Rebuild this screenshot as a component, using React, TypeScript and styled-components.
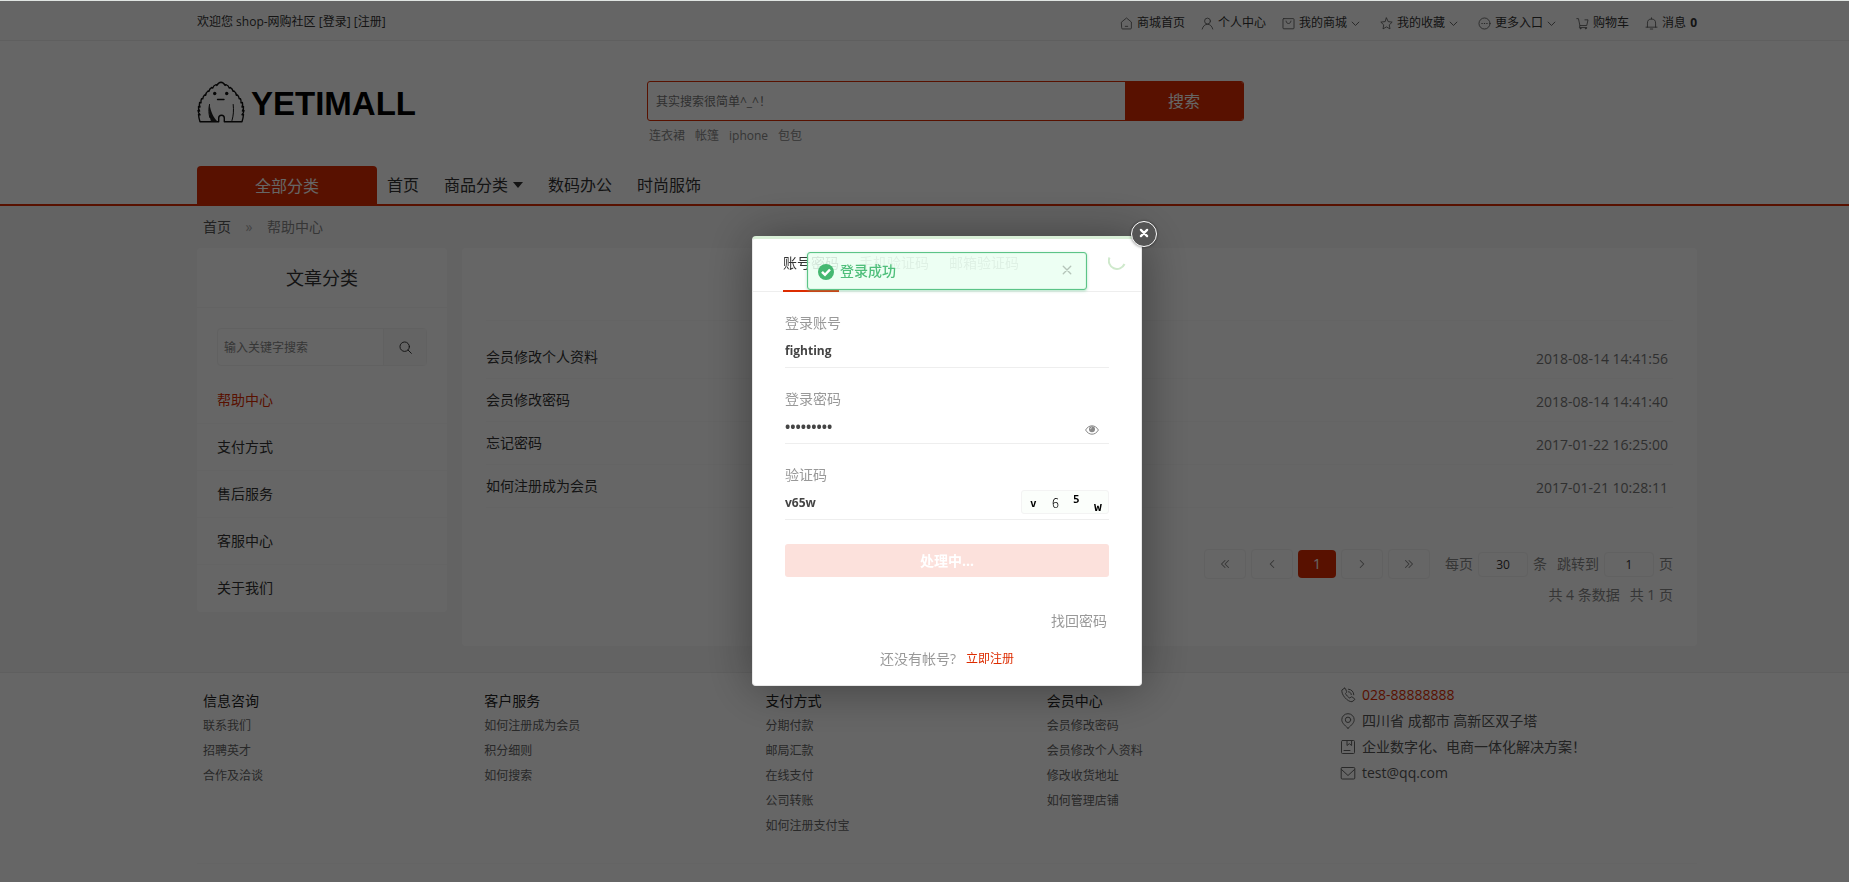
import React from "react";
import styled, { createGlobalStyle } from "styled-components";

const red = "#dd2c00";

const GlobalStyle = createGlobalStyle`
  * { box-sizing: border-box; }
  body {
    margin: 0;
    background: #fff;
    color: #333;
    font: 400 14px/20px "Open Sans", "Noto Sans CJK SC", sans-serif;
  }
  a { color: inherit; text-decoration: none; }
  button, input { font: inherit; color: inherit; margin: 0; }
  button { cursor: pointer; }
  ul { margin: 0; padding: 0; list-style: none; }
  h2, h3 { margin: 0; font-weight: inherit; }
`;

const Container = styled.div`
  padding: 0 152px 0 197px;
`;

/* ---------- icons ---------- */

const Svg = styled.svg<{ $size: number }>`
  width: ${(p) => p.$size}px;
  height: ${(p) => p.$size}px;
  flex: none;
  fill: none;
  stroke: currentColor;
  stroke-linecap: round;
  stroke-linejoin: round;
`;

const shapes: Record<string, React.ReactNode> = {
  home: (
    <>
      <path d="M2 6.200 8 1.200l6 5V13.500a1.200 1.200 0 0 1-1.200 1.200H3.200A1.200 1.200 0 0 1 2 13.500z" />
      <path d="M6.500 11.500h3" />
    </>
  ),
  user: (
    <>
      <circle cx="8" cy="5" r="3.600" />
      <path d="M1.500 14.800C2.500 11 5 9 8 9s5.500 2 6.500 5.800" />
    </>
  ),
  shop: (
    <>
      <rect x="1.200" y="2" width="13.600" height="12.500" rx="1" />
      <path d="M5 5c.3 2 1.500 3 3 3s2.700-1 3-3" />
    </>
  ),
  star: <path d="m8 1.200 2.100 4.500 4.900.6-3.600 3.400.9 4.900L8 12.200l-4.300 2.400.9-4.900L1 6.300l4.900-.6z" />,
  more: (
    <>
      <circle cx="8" cy="8" r="6.800" />
      <path d="M4.800 8h.4M7.800 8h.4M10.800 8h.4" strokeWidth="1.400" />
    </>
  ),
  cart: (
    <>
      <path d="M1 2h2l1.800 8.500h8.400L14.800 3.500H11" />
      <path d="M4.800 10.500 4.200 13h9" />
      <circle cx="5.500" cy="14.200" r=".5" />
      <circle cx="12" cy="14.200" r=".5" />
    </>
  ),
  bell: <path d="M3 12.500V7.500a5 5 0 0 1 10 0v5M1.200 12.500h13.600M6.500 14.800h3M8 2.500V1" />,
  down: <path d="m2 5.500 6 6 6-6" />,
  search: (
    <>
      <circle cx="7" cy="7" r="5.800" />
      <path d="m11.200 11.200 4 4" />
    </>
  ),
  phone: (
    <>
      <path d="M4.300 1.300 1.900 3C1 7.500 7.500 15 12 14.700l2.500-1.800c.4-.4.3-.8 0-1.200l-2.400-1.700c-.5-.3-.9-.2-1.200.1l-1 1C8.500 10.700 6 7.800 5.500 6.500l.9-1c.3-.4.4-.8.1-1.200L5.500 1.700c-.3-.5-.8-.7-1.200-.4z" />
      <path d="M8.500 2.200c3 .2 5.200 2.500 5.300 5.600M8.500 4.800c1.600.1 2.700 1.300 2.800 2.800" />
    </>
  ),
  pin: (
    <>
      <path d="M8 15.300C4 11.800 1.800 9.500 1.800 6.700a6.200 6 0 0 1 12.400 0c0 2.800-2.200 5.100-6.200 8.600z" />
      <circle cx="8" cy="6.800" r="2.700" />
    </>
  ),
  book: (
    <>
      <rect x="1.500" y="1.500" width="13" height="13" rx="1" />
      <path d="M7 1.500v5l2.300-1.800 2.300 1.800v-5M4 11.500h6" />
    </>
  ),
  mail: (
    <>
      <rect x="1.200" y="2.500" width="13.600" height="11.500" rx="1" />
      <path d="m1.500 4.500 6.500 6 6.500-6" />
    </>
  ),
  close: <path d="m3 3 10 10M13 3 3 13" />,
  left: <path d="M10 4 6 8l4 4" />,
  right: <path d="m6 4 4 4-4 4" />,
  first: <path d="M8 4 4 8l4 4M12 4 8 8l4 4" />,
  last: <path d="m4 4 4 4-4 4M8 4l4 4-4 4" />,
};

const Icon = ({ name, size = 14, weight = 1 }: { name: string; size?: number; weight?: number }) => (
  <Svg $size={size} viewBox="0 0 16 16" strokeWidth={weight} aria-hidden="true">
    {shapes[name]}
  </Svg>
);

/* ---------- top bar ---------- */

const TopBar = styled.div`
  background: #fcfcfc;
  border-bottom: 1px solid #eee;
  font-size: 12px;
`;

const TopInner = styled(Container)`
  display: flex;
  justify-content: space-between;
  height: 40px;
  padding-top: 12px;
`;

const TopLinks = styled.ul`
  display: flex;
  gap: 16px;
  padding-top: 1px;
`;

const TopLink = styled.a<{ $wide?: boolean }>`
  display: flex;
  align-items: center;
  gap: 4px;
  margin-right: ${(p) => (p.$wide ? 4 : 0)}px;
  svg { color: #555; }
`;

const topLinks: { icon: string; label: string; menu?: boolean; count?: number }[] = [
  { icon: "home", label: "商城首页" },
  { icon: "user", label: "个人中心" },
  { icon: "shop", label: "我的商城", menu: true },
  { icon: "star", label: "我的收藏", menu: true },
  { icon: "more", label: "更多入口", menu: true },
  { icon: "cart", label: "购物车" },
  { icon: "bell", label: "消息", count: 0 },
];

/* ---------- header ---------- */

const Header = styled(Container)`
  display: flex;
  align-items: flex-start;
  height: 125px;
  padding-top: 40px;
`;

const Logo = styled.a`
  display: flex;
  align-items: center;
  gap: 6px;
  width: 450px;
  height: 42px;
  flex: none;
  color: #000;
  font: bold 33px/42px "Liberation Sans", Arial, sans-serif;
`;

const LogoName = styled.span`
  padding-top: 4px;
`;

const YetiSvg = styled.svg`
  width: 48px;
  height: 42px;
  flex: none;
`;

const Yeti = () => (
  <YetiSvg viewBox="0 0 48 42" fill="none" stroke="#111" strokeWidth="1.400" strokeLinejoin="round" strokeLinecap="round" aria-hidden="true">
    <path d="M3 40.800Q1.800 37 1.500 33.500l1.500.3Q1.200 31.500 1 29.500l1.600.5Q1.200 27.500 1.500 25.500l1.500.6Q2 23.500 2.600 21.500l1.400.4Q3.600 19.500 4.600 17.600l1.200.2Q6 15.500 7.500 14l1.200.2Q9 11.500 11 10l.9.400Q12.500 7.500 14.800 6.500l.900.600Q16.500 4.300 19 3.600l.900.800Q21.500 1.300 24 1.200Q26.500 1.300 28.100 4.400l.900-.800Q31.500 4.300 32.300 7.100l.900-.600Q35.500 7.500 36.100 10.400l.9-.4Q39 11.500 39.300 14.200l1.200-.2Q42 15.500 42.200 17.800l1.200-.2Q44.400 19.500 44 21.900l1.400-.4Q46 23.500 45 26.100l1.500-.6Q46.800 27.500 45.400 30l1.600-.5Q46.800 31.500 45 33.800l1.500-.3Q46.200 37 45 40.800H27.300V37a2.800 2.800 0 0 0-5.600 0v3.800z" />
    <path d="M12.500 23.500c-1 6-.2 12 1.500 17h6.500c-4-4-6.500-9-8-17z" fill="#222" stroke="none" />
    <path d="M36.200 23.500c.6 6 .3 11-1.200 16M12.500 23.500c-1 5-.8 9 .3 13" strokeWidth="1" />
    <circle cx="17.700" cy="12.500" r="1.700" fill="#111" stroke="none" />
    <circle cx="29.700" cy="12.500" r="1.700" fill="#111" stroke="none" />
    <path d="M20.500 18.500h6.500" />
  </YetiSvg>
);

const SearchArea = styled.div`
  width: 597px;
`;

const SearchForm = styled.form`
  display: flex;
  height: 40px;
  border: 1px solid ${red};
  border-radius: 3px;
  overflow: hidden;
`;

const SearchInput = styled.input`
  flex: 1;
  min-width: 0;
  border: 0;
  padding: 2px 8px 0;
  background: transparent;
  font-size: 12px;
  outline: none;
  &::placeholder { color: #777; opacity: 1; }
`;

const SearchButton = styled.button`
  width: 118px;
  border: 0;
  background: ${red};
  color: #fff;
  font-size: 16px;
`;

const HotWords = styled.div`
  display: flex;
  gap: 10px;
  padding: 5px 2px 0;
  color: #888;
  font-size: 12px;
`;

const NavLine = styled.nav`
  border-bottom: 2px solid ${red};
  font-size: 16px;
`;

const NavInner = styled(Container)`
  display: flex;
`;

const AllCategories = styled.a`
  width: 180px;
  height: 38px;
  margin-right: 10px;
  border-radius: 4px 4px 0 0;
  background: ${red};
  color: #fff;
  line-height: 40px;
  text-align: center;
`;

const NavItem = styled.a`
  display: flex;
  align-items: center;
  gap: 5px;
  height: 38px;
  margin-right: 25px;
`;

const Caret = styled.span`
  border: 5px solid transparent;
  border-top: 6px solid #333;
  border-bottom: 0;
`;

/* ---------- body ---------- */

const Body = styled.main`
  background: #f8f8f8;
  padding-bottom: 26px;
`;

const Crumbs = styled.div`
  display: flex;
  align-items: center;
  height: 42px;
  padding-left: 6px;
  color: #888;
`;

const CrumbMark = styled.span`
  width: 36px;
  text-align: center;
  color: #aaa;
`;

const CrumbHome = styled.a`
  color: #555;
`;

const Columns = styled.div`
  display: flex;
  align-items: flex-start;
  gap: 15px;
`;

const Sidebar = styled.aside`
  width: 250px;
  flex: none;
  padding-bottom: 1px;
  border-radius: 4px;
  background: #fff;
`;

const SideTitle = styled.h2`
  height: 60px;
  border-bottom: 1px solid #f8f8f8;
  font-size: 18px;
  line-height: 60px;
  text-align: center;
`;

const SideSearch = styled.form`
  display: flex;
  height: 38px;
  margin: 20px 20px 10px;
  border: 1px solid #f2f2f2;
  border-radius: 4px;
`;

const SideInput = styled.input`
  flex: 1;
  min-width: 0;
  border: 0;
  padding: 2px 6px 0;
  background: transparent;
  font-size: 12px;
  &::placeholder { color: #888; opacity: 1; }
`;

const SideSearchButton = styled.button`
  display: flex;
  align-items: center;
  justify-content: center;
  width: 43px;
  padding: 0;
  border: 0;
  border-left: 1px solid #f2f2f2;
  background: #fbfbfb;
`;

const SideLink = styled.a<{ $active?: boolean }>`
  display: block;
  height: 47px;
  padding: 0 20px;
  color: ${(p) => (p.$active ? red : "#333")};
  line-height: 47px;
  li + li > & { box-shadow: inset 0 1px #fafafa; }
`;

const Panel = styled.section`
  flex: 1;
  min-width: 0;
  height: 398px;
  padding: 72px 24px 0;
  border-radius: 4px;
  background: #fff;
`;

const ArticleList = styled.ul`
  padding-top: 15px;
  border-top: 1px solid #fafafa;
`;

const Article = styled.li`
  display: flex;
  align-items: center;
  justify-content: space-between;
  height: 43px;
  padding-right: 5px;
  border-bottom: 1px solid #fafafa;
`;

const ArticleDate = styled.time`
  padding-top: 4px;
  color: #777;
`;

const Pager = styled.div`
  display: flex;
  align-items: center;
  justify-content: flex-end;
  gap: 5px;
  height: 30px;
  margin-top: 41px;
  color: #888;
`;

const PageButton = styled.button`
  display: flex;
  align-items: center;
  justify-content: center;
  width: 42px;
  height: 30px;
  padding: 0;
  border: 1px solid #f2f2f2;
  border-radius: 4px;
  background: #fff;
`;

const CurrentPage = styled(PageButton)`
  width: 38px;
  height: 28px;
  border: 0;
  background: ${red};
  color: #fff;
`;

const PageField = styled.label`
  display: flex;
  align-items: center;
  gap: 5px;
  margin-left: 5px;
  &:first-of-type { margin-left: 10px; }
`;

const PageInput = styled.input`
  width: 50px;
  height: 25px;
  padding: 0;
  border: 1px solid #f2f2f2;
  border-radius: 4px;
  background: #fff;
  color: #333;
  font-size: 12px;
  text-align: center;
`;

const Totals = styled.div`
  display: flex;
  justify-content: flex-end;
  gap: 10px;
  padding-top: 6px;
  color: #888;
`;

/* ---------- footer ---------- */

const Footer = styled.footer`
  border-top: 1px solid #eee;
`;

const FooterInner = styled(Container)`
  display: grid;
  grid-template-columns: repeat(4, 3fr) 4fr;
  min-height: 190px;
  padding-top: 15px;
`;

const FooterRule = styled.hr`
  margin: 0 152px 18px 197px;
  border: 0;
  border-top: 1px solid #fafafa;
`;

const FooterColumn = styled.section`
  padding-left: 6px;
  color: #666;
  font-size: 12px;
  line-height: 25px;
`;

const FooterTitle = styled.h3`
  color: #222;
  font-size: 14px;
`;

const Contact = styled.address`
  display: flex;
  flex-direction: column;
  gap: 6px;
  margin-top: -3px;
  padding-left: 18px;
  color: #555;
  font-style: normal;
`;

const ContactLine = styled.div<{ $hot?: boolean }>`
  display: flex;
  align-items: center;
  gap: 6px;
  svg { color: #666; }
  color: ${(p) => (p.$hot ? red : "#555")};
`;

const footerColumns = [
  { title: "信息咨询", links: ["联系我们", "招聘英才", "合作及洽谈"] },
  { title: "客户服务", links: ["如何注册成为会员", "积分细则", "如何搜索"] },
  { title: "支付方式", links: ["分期付款", "邮局汇款", "在线支付", "公司转账", "如何注册支付宝"] },
  { title: "会员中心", links: ["会员修改密码", "会员修改个人资料", "修改收货地址", "如何管理店铺"] },
];

/* ---------- login dialog ---------- */

const Overlay = styled.div`
  position: fixed;
  inset: 0;
  display: flex;
  align-items: center;
  justify-content: center;
  padding: 39px 0 0 45px;
  border-top: 1px solid #e0e5e2;
  background: rgba(0, 0, 0, 0.6);
`;

const Dialog = styled.div`
  position: relative;
  width: 390px;
  height: 450px;
  border: 1px solid #e8e8e8;
  border-top: 3px solid #d9efd7;
  border-radius: 4px;
  background: #fff;
  box-shadow: 1px 1px 50px rgba(0, 0, 0, 0.4);
`;

const DialogClose = styled.button`
  position: absolute;
  top: -18px;
  right: -16px;
  display: flex;
  align-items: center;
  justify-content: center;
  width: 26px;
  height: 26px;
  padding: 0 0 2px;
  border: 1px solid #fff;
  border-radius: 50%;
  background: #555;
  color: #fff;
  box-shadow: 0 0 3px rgba(0, 0, 0, 0.5);
`;

const Tabs = styled.div`
  display: flex;
  gap: 20px;
  height: 53px;
  padding-left: 30px;
  border-bottom: 1px solid #eee;
`;

const Tab = styled.button<{ $active?: boolean }>`
  height: 53px;
  padding: 0 0 3px;
  border: 0;
  border-bottom: 2px solid ${(p) => (p.$active ? red : "transparent")};
  background: none;
  color: ${(p) => (p.$active ? "#333" : "#888")};
`;

const Spinner = styled.svg`
  position: absolute;
  top: 13px;
  right: 15px;
  width: 18px;
  height: 18px;
`;

const Toast = styled.div`
  position: absolute;
  top: 13px;
  left: 54px;
  display: flex;
  align-items: center;
  width: 280px;
  height: 38px;
  padding: 2px 13px 0 10px;
  border: 1px solid #5cc487;
  border-radius: 3px;
  background: rgba(234, 255, 241, 0.88);
  box-shadow: inset 0 0 1px #5cc487, 0 1px 3px rgba(92, 196, 135, 0.5);
  color: #4fbf7b;
`;

const ToastText = styled.span`
  flex: 1;
  padding-bottom: 2px;
  margin-left: 6px;
  font-weight: 500;
`;

const ToastClose = styled.button`
  display: flex;
  padding: 0 0 4px;
  border: 0;
  background: none;
  color: #b5c4b9;
`;

const LoginForm = styled.form`
  padding: 21px 32px 0;
`;

const Field = styled.div`
  position: relative;
  height: 76px;
`;

const FieldLabel = styled.label`
  display: block;
  height: 20px;
  color: #999;
`;

const FieldInput = styled.input`
  display: block;
  width: 100%;
  height: 35px;
  padding: 0 100px 0 0;
  border: 0;
  border-bottom: 1px solid #eee;
  background: transparent;
  color: #444;
  font: bold 12px/20px "Open Sans", "Noto Sans CJK SC", sans-serif;
  outline: none;
  &[type="password"] { font-size: 14px; }
`;

const EyeButton = styled.button`
  position: absolute;
  right: 10px;
  bottom: 30px;
  display: flex;
  padding: 0;
  border: 0;
  background: none;
`;

const CaptchaSvg = styled.svg`
  position: absolute;
  right: 0;
  bottom: 27px;
  width: 88px;
  height: 24px;
  border: 1px solid #f3f3f3;
  border-radius: 3px;
  background: #fbfefb;
  font-family: "DejaVu Sans Mono", "Liberation Mono", monospace;
`;

const Submit = styled.button`
  display: block;
  width: 100%;
  height: 33px;
  margin-top: 3px;
  border: 0;
  border-radius: 3px;
  background: #fce1dc;
  color: #fff;
  font-weight: bold;
`;

const Forgot = styled.a`
  display: block;
  margin: 34px 2px 0;
  color: #999;
  text-align: right;
`;

const Register = styled.p`
  display: flex;
  justify-content: center;
  gap: 10px;
  margin: 18px 0 0;
  color: #999;
`;

const RegisterLink = styled.a`
  color: ${red};
  font-size: 12px;
`;

const LoginDialog = () => (
  <Overlay>
    <Dialog role="dialog" aria-label="登录">
      <Tabs role="tablist">
        <Tab role="tab" aria-selected="true" $active>账号密码</Tab>
        <Tab role="tab">手机验证码</Tab>
        <Tab role="tab">邮箱验证码</Tab>
      </Tabs>
      <Spinner viewBox="0 0 18 18" fill="none" stroke="#cfe9cc" strokeWidth="2" aria-hidden="true">
        <path d="M1.500 5.500A8 8 0 0 0 16.500 12" />
      </Spinner>
      <LoginForm>
        <Field>
          <FieldLabel htmlFor="account">登录账号</FieldLabel>
          <FieldInput id="account" defaultValue="fighting" />
        </Field>
        <Field>
          <FieldLabel htmlFor="password">登录密码</FieldLabel>
          <FieldInput id="password" type="password" defaultValue="123456789" />
          <EyeButton type="button" aria-label="显示密码">
            <svg width="14" height="10" viewBox="0 0 14 10" fill="none" stroke="#888" aria-hidden="true">
              <path d="M.6 5C2.200 2.200 4.500.8 7 .8S11.800 2.200 13.400 5C11.800 7.800 9.500 9.200 7 9.200S2.200 7.800.6 5z" />
              <circle cx="7" cy="4.300" r="3" fill="#888" stroke="none" />
              <path d="M5.500 4.200c0-.9.600-1.500 1.500-1.500" stroke="#fff" strokeWidth=".7" />
            </svg>
          </EyeButton>
        </Field>
        <Field>
          <FieldLabel htmlFor="captcha">验证码</FieldLabel>
          <FieldInput id="captcha" defaultValue="v65w" />
          <CaptchaSvg viewBox="0 0 86 22" fill="#000">
            <text x="8" y="16" fontSize="11" fontWeight="bold">v</text>
            <text x="30" y="17" fontSize="13" fontFamily="Noto Sans CJK SC" fontWeight="300">6</text>
            <text x="51" y="12" fontSize="11" fontWeight="bold">5</text>
            <text x="72" y="20" fontSize="13" fontWeight="bold">w</text>
          </CaptchaSvg>
        </Field>
        <Submit type="button">处理中...</Submit>
        <Forgot href="#">找回密码</Forgot>
        <Register>
          还没有帐号?<RegisterLink href="#">立即注册</RegisterLink>
        </Register>
      </LoginForm>
      <DialogClose aria-label="关闭">
        <Icon name="close" size={10} weight={3.6} />
      </DialogClose>
      <Toast role="status">
        <svg width="16" height="16" viewBox="0 0 16 16" aria-hidden="true">
          <circle cx="8" cy="8" r="8" fill="#45b871" />
          <path d="m4 7.800 3 3 5-5.300" fill="none" stroke="#fff" strokeWidth="2.500" />
        </svg>
        <ToastText>登录成功</ToastText>
        <ToastClose aria-label="关闭提示">
          <Icon name="close" size={12} weight={1.8} />
        </ToastClose>
      </Toast>
    </Dialog>
  </Overlay>
);

const App = () => (
  <>
    <GlobalStyle />
    <TopBar>
      <TopInner>
        <div>
          欢迎您 shop-网购社区 [<a href="#">登录</a>] [<a href="#">注册</a>]
        </div>
        <TopLinks>
          {topLinks.map((l) => (
            <li key={l.label}>
              <TopLink href="#" $wide={l.menu}>
                <Icon name={l.icon} size={13} />
                {l.label}
                {l.menu && <Icon name="down" size={9} weight={1.6} />}
                {l.count !== undefined && <b>{l.count}</b>}
              </TopLink>
            </li>
          ))}
        </TopLinks>
      </TopInner>
    </TopBar>
    <header>
      <Header>
        <Logo href="#">
          <Yeti />
          <LogoName>YETIMALL</LogoName>
        </Logo>
        <SearchArea>
          <SearchForm>
            <SearchInput aria-label="搜索" placeholder="其实搜索很简单^_^！" />
            <SearchButton type="button">搜索</SearchButton>
          </SearchForm>
          <HotWords>
            {["连衣裙", "帐篷", "iphone", "包包"].map((w) => (
              <a href="#" key={w}>{w}</a>
            ))}
          </HotWords>
        </SearchArea>
      </Header>
      <NavLine>
        <NavInner>
          <AllCategories href="#">全部分类</AllCategories>
          <NavItem href="#">首页</NavItem>
          <NavItem href="#">商品分类<Caret /></NavItem>
          <NavItem href="#">数码办公</NavItem>
          <NavItem href="#">时尚服饰</NavItem>
        </NavInner>
      </NavLine>
    </header>
    <Body>
      <Container>
        <Crumbs>
          <CrumbHome href="#">首页</CrumbHome>
          <CrumbMark>»</CrumbMark>
          帮助中心
        </Crumbs>
        <Columns>
          <Sidebar>
            <SideTitle>文章分类</SideTitle>
            <SideSearch>
              <SideInput aria-label="文章搜索" placeholder="输入关键字搜索" />
              <SideSearchButton type="button" aria-label="搜索文章">
                <Icon name="search" size={13} weight={1.2} />
              </SideSearchButton>
            </SideSearch>
            <ul>
              {["帮助中心", "支付方式", "售后服务", "客服中心", "关于我们"].map((t, i) => (
                <li key={t}>
                  <SideLink href="#" $active={i === 0}>{t}</SideLink>
                </li>
              ))}
            </ul>
          </Sidebar>
          <Panel>
            <ArticleList>
              {[
                ["会员修改个人资料", "2018-08-14 14:41:56"],
                ["会员修改密码", "2018-08-14 14:41:40"],
                ["忘记密码", "2017-01-22 16:25:00"],
                ["如何注册成为会员", "2017-01-21 10:28:11"],
              ].map(([title, date]) => (
                <Article key={title}>
                  <a href="#">{title}</a>
                  <ArticleDate>{date}</ArticleDate>
                </Article>
              ))}
            </ArticleList>
            <Pager>
              <PageButton aria-label="第一页"><Icon name="first" weight={1.2} /></PageButton>
              <PageButton aria-label="上一页"><Icon name="left" weight={1.2} /></PageButton>
              <CurrentPage>1</CurrentPage>
              <PageButton aria-label="下一页"><Icon name="right" weight={1.2} /></PageButton>
              <PageButton aria-label="最后一页"><Icon name="last" weight={1.2} /></PageButton>
              <PageField>每页<PageInput defaultValue="30" />条</PageField>
              <PageField>跳转到<PageInput defaultValue="1" />页</PageField>
            </Pager>
            <Totals>
              <span>共 4 条数据</span>
              <span>共 1 页</span>
            </Totals>
          </Panel>
        </Columns>
      </Container>
    </Body>
    <Footer>
      <FooterInner>
        {footerColumns.map((c) => (
          <FooterColumn key={c.title}>
            <FooterTitle>{c.title}</FooterTitle>
            <ul>
              {c.links.map((l) => (
                <li key={l}><a href="#">{l}</a></li>
              ))}
            </ul>
          </FooterColumn>
        ))}
        <Contact>
          <ContactLine $hot><Icon name="phone" size={16} />028-88888888</ContactLine>
          <ContactLine><Icon name="pin" size={16} />四川省 成都市 高新区双子塔</ContactLine>
          <ContactLine><Icon name="book" size={16} />企业数字化、电商一体化解决方案！</ContactLine>
          <ContactLine><Icon name="mail" size={16} />test@qq.com</ContactLine>
        </Contact>
      </FooterInner>
      <FooterRule />
    </Footer>
    <LoginDialog />
  </>
);

export default App;
